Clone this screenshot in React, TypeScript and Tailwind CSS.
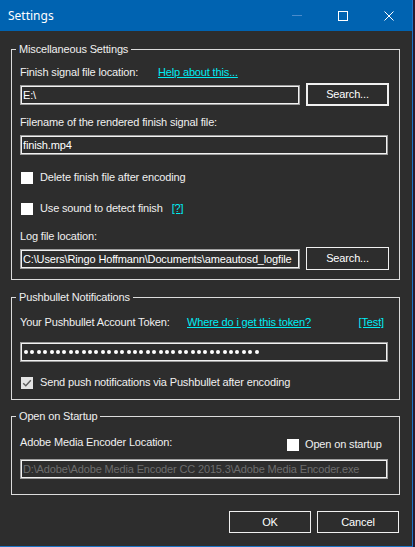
import React from "react";

type TBProps = { value: string; className: string; disabled?: boolean };

const TextBox = ({ value, className, disabled }: TBProps) => (
  <div
    className={`h-[20px] border border-[#9d9d9d] shadow-[inset_0_0_0_1px_#f2f2f2] bg-[#2d2d2d] flex items-center pl-[2px] overflow-hidden whitespace-nowrap ${
      disabled ? "text-[#6d6d6d]" : "text-white"
    } ${className}`}
  >
    {value}
  </div>
);

const Button = ({ label, className }: { label: string; className: string }) => (
  <div className={`flex items-center justify-center border-[#f0f0f0] text-white ${className}`}>{label}</div>
);

const CheckBox = ({ checked }: { checked?: boolean }) => (
  <div className={`w-[12px] h-[12px] shrink-0 ${checked ? "bg-[#e4e4e4]" : "bg-white"} flex items-center justify-center`}>
    {checked && (
      <svg width="12" height="12" viewBox="0 0 12 12">
        <path d="M2.2 6.2 L4.8 8.8 L9.8 3.2" fill="none" stroke="#5c5c5c" strokeWidth="1.4" />
      </svg>
    )}
  </div>
);

const Group = ({ title, className, children }: { title: string; className: string; children: React.ReactNode }) => (
  <div className={`relative border border-[#dcdcdc] pl-[8px] ${className}`}>
    <span className="absolute left-[4px] -top-[8px] px-[3px] bg-[#2d2d2d] leading-[14px]">{title}</span>
    {children}
  </div>
);

const Link = ({ children, className = "" }: { children: React.ReactNode; className?: string }) => (
  <span className={`text-[#00ecf4] underline underline-offset-[1px] ${className}`}>{children}</span>
);

export default function App() {
  const dots = Array.from({ length: 37 });
  return (
    <div className="w-[415px] h-[547px] bg-[#2b1a2e] flex font-['Liberation_Sans',Arial,sans-serif]">
      <div className="w-[413px] h-[547px] border-r border-b border-[#1d74c6] bg-[#2d2d2d] flex flex-col">
        {/* Title bar */}
        <div className="h-[31px] bg-[#0063b1] flex items-center shrink-0">
          <span className="pl-[8px] text-white text-[12px] font-['Noto_Sans','Open_Sans',sans-serif] flex-1">Settings</span>
          <div className="w-[46px] h-[31px] flex items-center justify-center">
            <div className="w-[10px] h-[1px] bg-[#4a8bcb]" />
          </div>
          <div className="w-[46px] h-[31px] flex items-center justify-center">
            <div className="w-[10px] h-[10px] border border-white" />
          </div>
          <div className="w-[46px] h-[31px] flex items-center justify-center">
            <svg width="10" height="10" viewBox="0 0 10 10">
              <path d="M0.5 0.5 L9.5 9.5 M9.5 0.5 L0.5 9.5" stroke="white" strokeWidth="1" fill="none" />
            </svg>
          </div>
        </div>

        {/* Body */}
        <div className="flex-1 pl-[11px] pr-[12px] pt-[18px] text-[11px] leading-[13px] tracking-[-0.15px] text-[#f0f0f0]">
          <Group title="Miscellaneous Settings" className="h-[231px]">
            <div className="mt-[16px] h-[13px] flex">
              <span className="w-[138px]">Finish signal file location:</span>
              <Link>Help about this...</Link>
            </div>
            <div className="mt-[4px] h-[23px] flex items-start gap-[6px]">
              <TextBox value="E:\" className="w-[280px] mt-[2px]" />
              <Button label="Search..." className="w-[83px] h-[23px] border-2" />
            </div>
            <div className="mt-[10px] h-[13px]">Filename of the rendered finish signal file:</div>
            <TextBox value="finish.mp4" className="mt-[6px] w-[368px]" />
            <div className="mt-[16px] h-[13px] flex items-center">
              <div className="ml-[1px] mr-[7px]">
                <CheckBox />
              </div>
              <span>Delete finish file after encoding</span>
            </div>
            <div className="mt-[18px] h-[13px] flex items-center">
              <div className="ml-[1px] mr-[7px]">
                <CheckBox />
              </div>
              <span>Use sound to detect finish</span>
              <Link className="ml-[9px]">[?]</Link>
            </div>
            <div className="mt-[15px] h-[13px]">Log file location:</div>
            <div className="mt-[4px] h-[23px] flex items-start gap-[6px]">
              <TextBox value="C:\Users\Ringo Hoffmann\Documents\ameautosd_logfile" className="w-[280px] mt-[2px]" />
              <Button label="Search..." className="w-[83px] h-[23px] border" />
            </div>
          </Group>

          <Group title="Pushbullet Notifications" className="mt-[17px] h-[103px]">
            <div className="mt-[18px] h-[13px] flex">
              <span className="w-[167px]">Your Pushbullet Account Token:</span>
              <Link>Where do i get this token?</Link>
              <Link className="ml-auto mr-[15px]">[Test]</Link>
            </div>
            <div className="mt-[13px] w-[368px] h-[20px] border border-[#9d9d9d] shadow-[inset_0_0_0_1px_#f2f2f2] flex items-center pl-[3px]">
              <div className="w-[235px] flex justify-between">
                {dots.map((_, i) => (
                  <span key={i} className="w-[4px] h-[4px] rounded-full bg-white" />
                ))}
              </div>
            </div>
            <div className="mt-[14px] h-[13px] flex items-center">
              <div className="ml-[1px] mr-[7px]">
                <CheckBox checked />
              </div>
              <span>Send push notifications via Pushbullet after encoding</span>
            </div>
          </Group>

          <Group title="Open on Startup" className="mt-[16px] h-[79px]">
            <div className="mt-[19px] h-[14px] flex items-start">
              <span className="w-[267px]">Adobe Media Encoder Location:</span>
              <div className="mt-[2px] flex items-center">
                <CheckBox />
                <span className="ml-[6px]">Open on startup</span>
              </div>
            </div>
            <TextBox
              value="D:\Adobe\Adobe Media Encoder CC 2015.3\Adobe Media Encoder.exe"
              className="mt-[9px] w-[368px]"
              disabled
            />
          </Group>

          <div className="mt-[16px] flex justify-end gap-[6px] mr-[1px]">
            <Button label="OK" className="w-[82px] h-[22px] border" />
            <Button label="Cancel" className="w-[82px] h-[22px] border" />
          </div>
        </div>
      </div>
    </div>
  );
}
